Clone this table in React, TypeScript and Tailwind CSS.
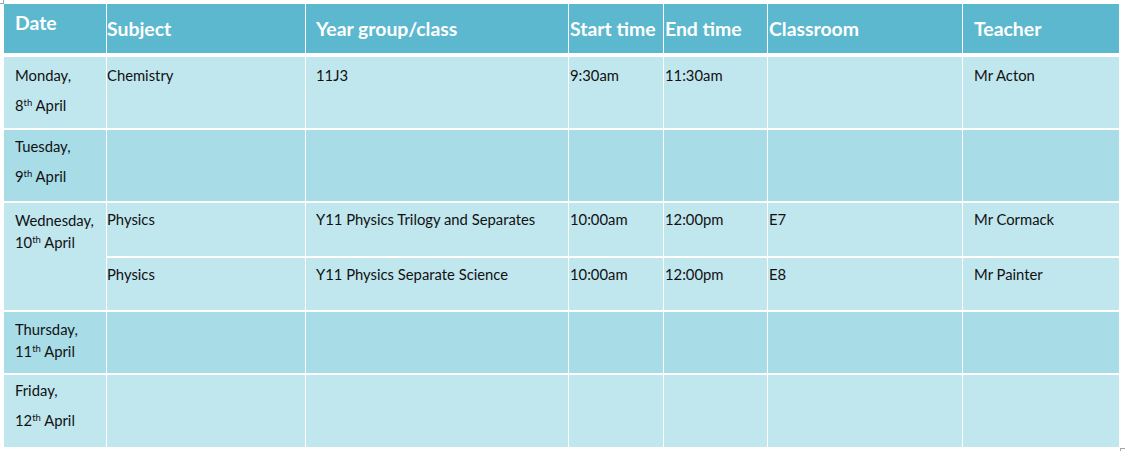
import React from "react";

const cols = "grid grid-cols-[102px_198px_262px_94px_103px_194px_156px] gap-x-px";

const headers = [
  { label: "Date", cls: "pl-[11px] pt-[8px]" },
  { label: "Subject", cls: "pl-0 pt-[14px]" },
  { label: "Year group/class", cls: "pl-[10px] pt-[14px]" },
  { label: "Start time", cls: "pl-px pt-[14px]" },
  { label: "End time", cls: "pl-px pt-[14px]" },
  { label: "Classroom", cls: "pl-px pt-[14px]" },
  { label: "Teacher", cls: "pl-[11px] pt-[14px]" },
];

const pads = ["pl-[11px]", "pl-0", "pl-[10px]", "pl-px", "pl-px", "pl-px", "pl-[11px]"];

const Day = ({ day, num, tight }: { day: string; num: string; tight?: boolean }) => (
  <div className={tight ? "leading-[22px]" : "leading-[30px]"}>
    <div>{day}</div>
    <div>
      {num}
      <sup className="text-[9.5px] -top-[5px]">th</sup> April
    </div>
  </div>
);

export default function App() {
  const light = "bg-[#c0e6ee]";
  const dark = "bg-[#a8dce7]";
  return (
    <div
      className="relative w-[1125px] h-[451px] bg-white pl-[4px] pt-[4px] text-[14.8px] text-[#111]"
      style={{ fontFamily: "Lato, 'Noto Sans', sans-serif" }}
    >
      <div className="absolute left-0 top-0 h-[4px] w-[4px] border-r border-b border-[#9aa7ab]" />
      <div className="absolute left-[1120px] top-[448px] h-[3px] w-[5px] border-l border-t border-[#9aa7ab]" />

      <div className={`${cols} h-[49px]`}>
        {headers.map((h) => (
          <div
            key={h.label}
            className={`bg-[#5bb8cf] text-white font-bold text-[19.4px] leading-[21px] whitespace-nowrap ${h.cls}`}
          >
            {h.label}
          </div>
        ))}
      </div>

      <div className={`${cols} mt-[4px] gap-y-[2px] grid-rows-[71px_71px_53px_52px_61px_72px]`}>
        {/* Monday */}
        <div className={`${light} ${pads[0]} pt-[3px]`}>
          <Day day="Monday," num="8" />
        </div>
        {["Chemistry", "11J3", "9:30am", "11:30am", "", "Mr Acton"].map((t, i) => (
          <div key={i} className={`${light} ${pads[i + 1]} pt-[8px] leading-[21px]`}>
            {t}
          </div>
        ))}

        {/* Tuesday */}
        <div className={`${dark} ${pads[0]} pt-[1px]`}>
          <Day day="Tuesday," num="9" />
        </div>
        {[0, 1, 2, 3, 4, 5].map((i) => (
          <div key={i} className={dark} />
        ))}

        {/* Wednesday */}
        <div className={`${light} ${pads[0]} pt-[6px] row-span-2`}>
          <Day day="Wednesday," num="10" tight />
        </div>
        {["Physics", "Y11 Physics Trilogy and Separates", "10:00am", "12:00pm", "E7", "Mr Cormack"].map(
          (t, i) => (
            <div key={i} className={`${light} ${pads[i + 1]} pt-[6px] leading-[21px]`}>
              {t}
            </div>
          )
        )}
        {["Physics", "Y11 Physics Separate Science", "10:00am", "12:00pm", "E8", "Mr Painter"].map(
          (t, i) => (
            <div key={i} className={`${light} ${pads[i + 1]} pt-[6px] leading-[21px]`}>
              {t}
            </div>
          )
        )}

        {/* Thursday */}
        <div className={`${dark} ${pads[0]} pt-[6px]`}>
          <Day day="Thursday," num="11" tight />
        </div>
        {[0, 1, 2, 3, 4, 5].map((i) => (
          <div key={i} className={dark} />
        ))}

        {/* Friday */}
        <div className={`${light} ${pads[0]} pt-0`}>
          <Day day="Friday," num="12" />
        </div>
        {[0, 1, 2, 3, 4, 5].map((i) => (
          <div key={i} className={light} />
        ))}
      </div>
    </div>
  );
}
